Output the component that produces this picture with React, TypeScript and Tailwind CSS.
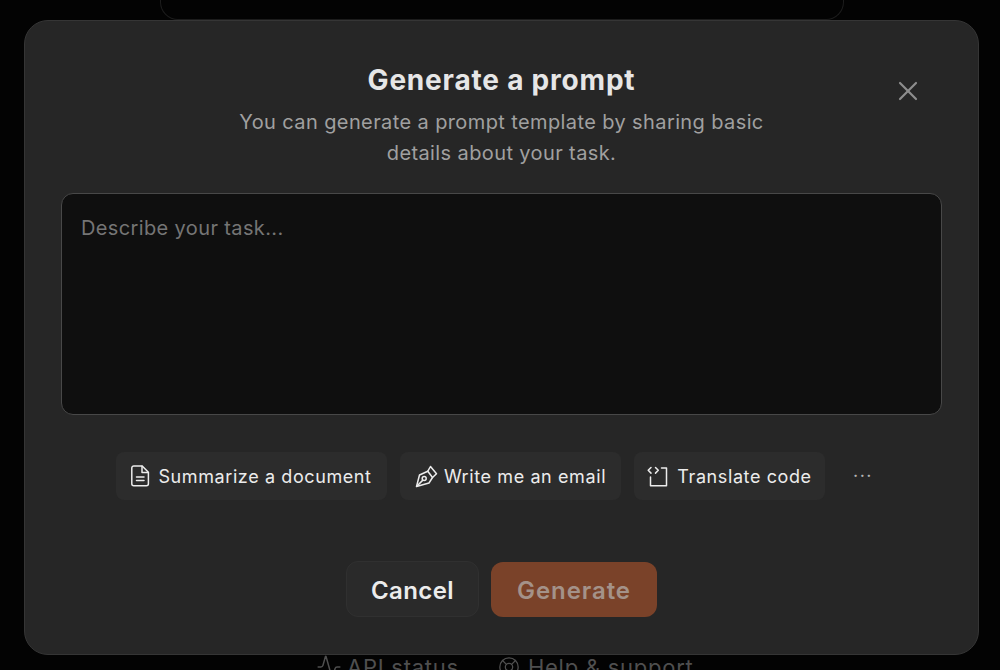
import { X, Activity, LifeBuoy } from "lucide-react";

function DocIcon() {
  return (
    <svg width="19" height="22" viewBox="0 0 19 22" fill="none" stroke="currentColor" strokeWidth="1.5" strokeLinecap="round" strokeLinejoin="round">
      <path d="M2.8 1h8.4l6.2 6.2v11.6a2 2 0 0 1-2 2H2.8a2 2 0 0 1-2-2V3a2 2 0 0 1 2-2Z" />
      <path d="M11 1.2v6.2h6.2" />
      <path d="M5.5 12h7.5M5.5 15.5h7.5" />
    </svg>
  );
}

function PenIcon() {
  return (
    <svg width="23" height="23" viewBox="0 0 23 23" fill="none" stroke="currentColor" strokeWidth="1.5" strokeLinecap="round" strokeLinejoin="round">
      <path d="M1.5 21.5 4.5 10l8.3-3.8 4.7 6.3-3.5 5.5Z" />
      <path d="M12.8 6.2 15.5 1.5l6 7.3-4 3.7" />
      <path d="M1.8 21.2 7.6 15.4" />
      <circle cx="9.2" cy="13.6" r="2" />
    </svg>
  );
}

function CodeIcon() {
  return (
    <svg width="21" height="21" viewBox="0 0 21 21" fill="none" stroke="currentColor" strokeWidth="1.5" strokeLinecap="round" strokeLinejoin="round">
      <path d="M4 1.5 1.2 4.3 4 7.1" />
      <path d="M8.5 1.5l2.8 2.8-2.8 2.8" />
      <path d="M14.5 2h5v17.8H3.5V11" />
    </svg>
  );
}

function Chip({ icon, label, width, gap }: { icon: React.ReactNode; label: string; width: string; gap: string }) {
  return (
    <button className={`${width} ${gap} h-[48px] flex items-center justify-center rounded-[8px] bg-[#2c2c2c] text-[#ececec] text-[18px] tracking-[0.6px]`}>
      {icon}
      <span>{label}</span>
    </button>
  );
}

export default function App() {
  return (
    <div className="relative w-[1000px] h-[670px] overflow-hidden bg-[#030303] font-['Inter',sans-serif]">
      <div className="ml-[160px] w-[684px] h-[22px] -mt-[2px] rounded-b-[18px] border border-t-0 border-[#1c1c1c]" />

      <div className="absolute top-[654px] left-[316px] flex items-center gap-[39px] text-[#4f4f4f] text-[22px] leading-[26px] tracking-[0.75px]">
        <div className="flex items-center gap-[5px]">
          <Activity size={26} strokeWidth={1.4} />
          <span>API status</span>
        </div>
        <div className="flex items-center gap-[8px]">
          <LifeBuoy size={22} strokeWidth={1.4} />
          <span>Help &amp; support</span>
        </div>
      </div>

      <div className="absolute left-[24px] top-[20px] w-[955px] h-[635px] rounded-[24px] bg-[#262626] border border-[#353535] flex flex-col items-center pt-[41px]">
        <button className="absolute top-[54px] right-[54px] text-[#8d8d8d]">
          <X size={32} strokeWidth={1.6} />
        </button>

        <h2 className="text-[28px] leading-[36px] font-bold tracking-[0.8px] text-[#e6e6e6]">Generate a prompt</h2>
        <p className="mt-[9px] text-[20px] leading-[31px] tracking-[0.39px] text-[#a0a0a0] text-center w-[560px]">
          You can generate a prompt template by sharing basic details about your task.
        </p>

        <div className="mt-[24px] w-[881px] h-[222px] rounded-[12px] bg-[#0f0f0f] border border-[#484848] px-[19px] py-[19px] text-[20px] leading-[30px] tracking-[0.37px] text-[#757575]">
          Describe your task...
        </div>

        <div className="mt-[37px] flex items-center gap-[13px]">
          <Chip width="w-[271px]" gap="gap-[8px]" label="Summarize a document" icon={<DocIcon />} />
          <Chip width="w-[221px]" gap="gap-[6px]" label="Write me an email" icon={<PenIcon />} />
          <Chip width="w-[191px]" gap="gap-[9px]" label="Translate code" icon={<CodeIcon />} />
          <span className="ml-[15px] mr-[14px] w-[20px] text-[#b5b5b5] text-[18px] leading-[18px] tracking-[1.5px] text-center -mt-[1px]">···</span>
        </div>

        <div className="mt-[61px] flex items-center gap-[12px]">
          <button className="w-[133px] h-[56px] pt-[3px] rounded-[12px] bg-[#2a2a2a] border border-[#303030] text-[#ececec] text-[24px] font-semibold tracking-[0.4px]">Cancel</button>
          <button className="w-[166px] h-[55px] pt-[3px] rounded-[12px] bg-[#7a4229] text-[#a49289] text-[24px] font-semibold tracking-[0.9px]">Generate</button>
        </div>
      </div>
    </div>
  );
}
